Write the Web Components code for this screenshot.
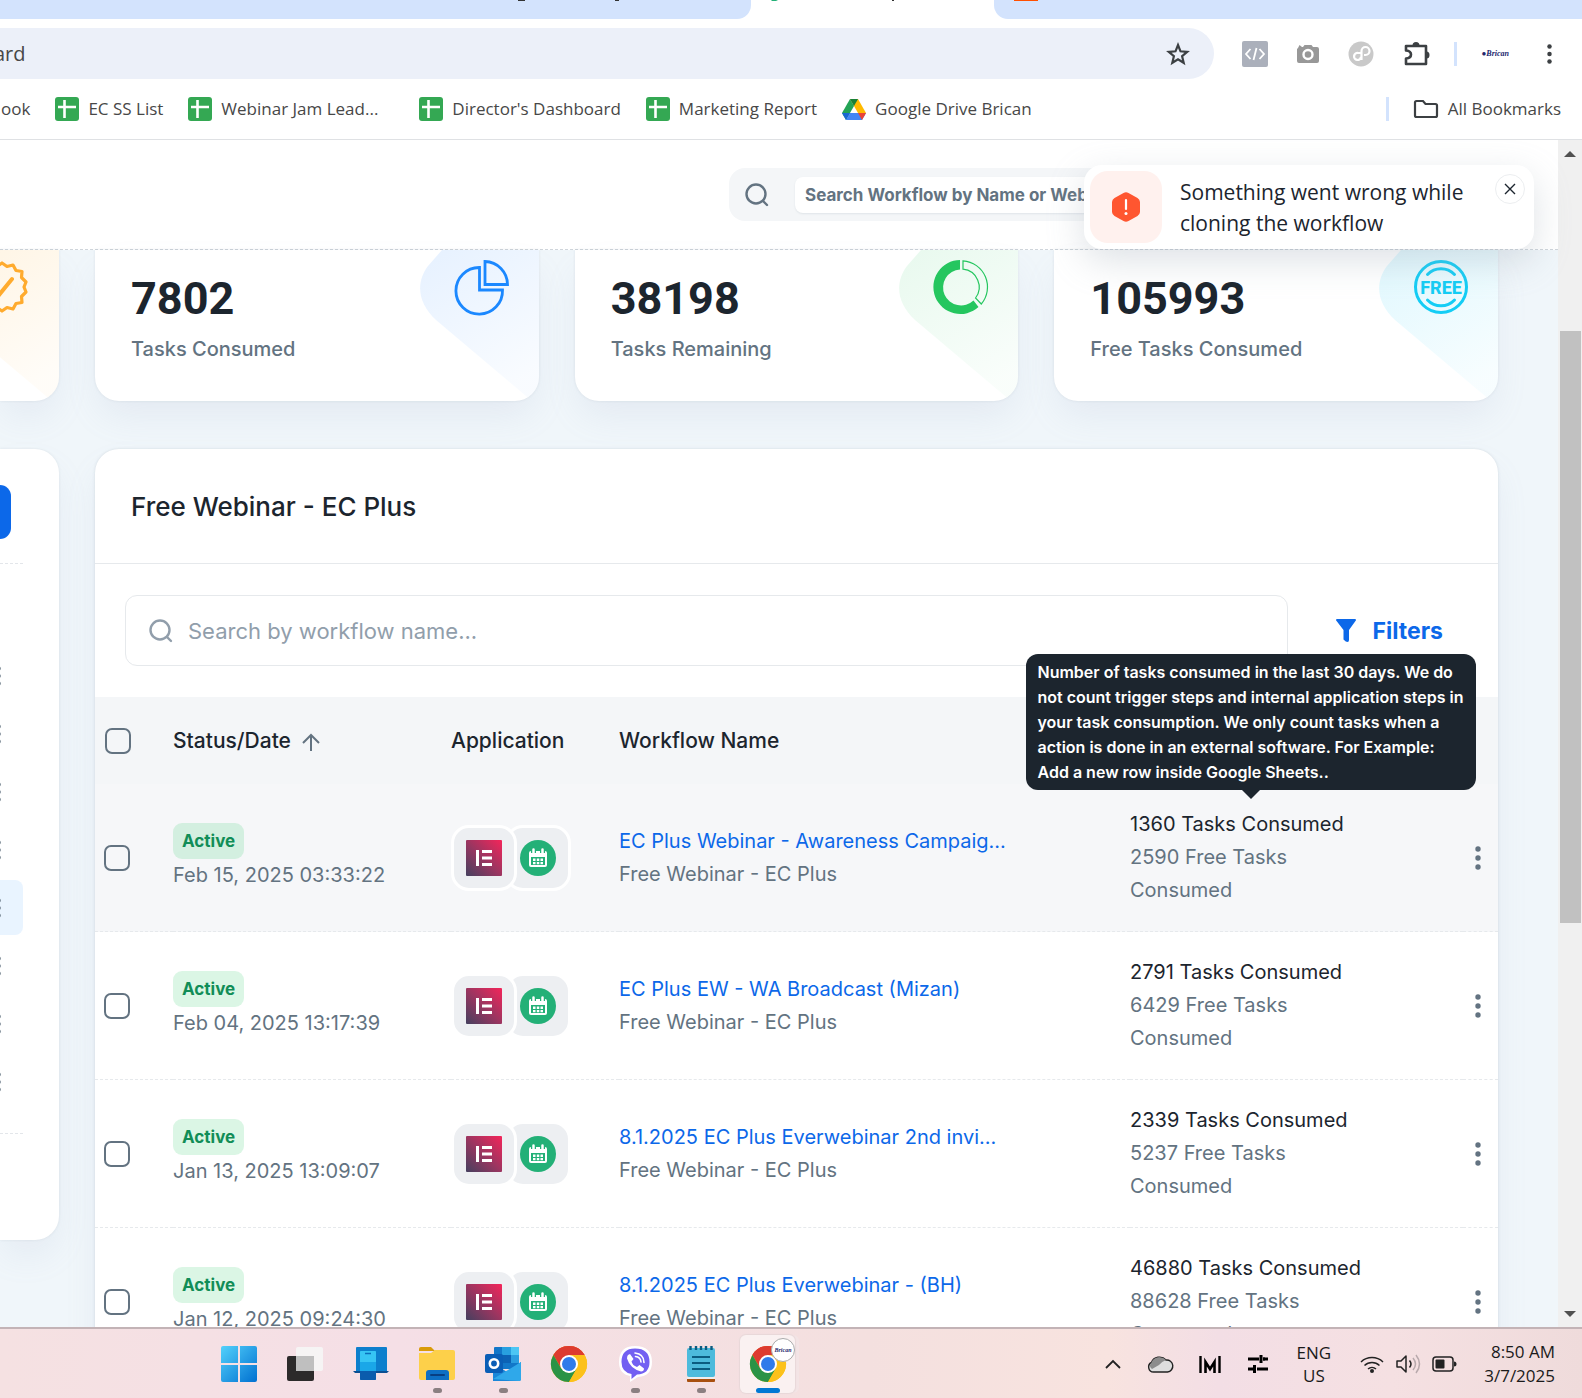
<!DOCTYPE html>
<html lang="en">
<head>
<meta charset="UTF-8">
<title>Workflow Dashboard</title>
<style>
    html, body { height: 100%; }
    body {
        margin: 0;
        overflow: hidden;
        font-family: Inter, "Liberation Sans", sans-serif;
        font-size: 20px;
        line-height: 33px;
        color: #1c252e;
        background: #fff;
        --muted: #637381;
        --blue: #0c68e9;
        --system: "Open Sans", "Noto Sans", sans-serif;
    }
</style>
</head>
<body>
<desktop-screen></desktop-screen>
<script>
const sheetIcon = '<rect width="24" height="24" rx="3" fill="#34a853"/><path d="M9.500 3v18M3 10h18" stroke="#fff" stroke-width="2.600"/>';

const chromeRing = `
    <circle cx="18" cy="18" r="18" fill="#fbbc05"/>
    <path d="M18 18L2.400 9A18 18 0 0 1 33.600 9z" fill="#ea4335"/>
    <path d="M18 9H33.600A18 18 0 0 0 2.400 9L10 22z" fill="#dd3b2f"/>
    <path d="M2.400 9A18 18 0 0 0 18 36L25.800 22.500 18 27 10.200 22.500z" fill="#2a9346"/>
    <path d="M33.600 9A18 18 0 0 1 18 36l7.800-13.500L26 14 18 9z" fill="#fcc11a"/>
    <circle cx="18" cy="18" r="9" fill="#fff"/><circle cx="18" cy="18" r="7" fill="#2f7bea"/>`;

// name: [viewBox, markup]
const ICONS = {
    sheet: ['0 0 24 24', sheetIcon],
    drive: ['0 0 24 22', '<path d="M8 1h8l8 14h-8z" fill="#ffba00"/><path d="M8 1l4 7-8 14-4-7z" fill="#23a455"/><path d="M4 22l4-7h16l-4 7z" fill="#4285f4"/><path d="M8 1h8l-4 7z" fill="#188038"/><path d="M16 15h8l-4 7z" fill="#ea4335"/><path d="M0 15h8l-4 7z" fill="#1967d2"/>'],
    star: ['0 0 24 24', '<path d="M12 3l2.500 6.300 6.700.5-5.100 4.400 1.600 6.600L12 17.200l-5.700 3.600 1.600-6.600-5.100-4.400 6.700-.5z" fill="none" stroke="#3c4043" stroke-width="2.200"/>'],
    code: ['0 0 26 26', '<rect width="26" height="26" rx="2" fill="#abb0bb"/><path d="M8.500 8L4 13l4.500 5M17.500 8l4.500 5-4.500 5M14.500 7l-3 12" fill="none" stroke="#fff" stroke-width="1.800"/>'],
    camera: ['0 0 24 24', '<path d="M2 6l1.500-3L6 5h1l1.500-2h7L17 5h4a2 2 0 0 1 2 2v12a2 2 0 0 1-2 2H3a2 2 0 0 1-2-2V7z" fill="#989898"/><circle cx="12" cy="12.500" r="4.500" fill="none" stroke="#fff" stroke-width="2.400"/>'],
    swirl: ['0 0 26 26', '<circle cx="13" cy="13" r="12.500" fill="#c9c9c9"/><path d="M13.500 19V10a4 4 0 1 1 4 4H16M12.500 12H10a3.500 3.500 0 1 0 3 4" fill="none" stroke="#fff" stroke-width="2.200"/>'],
    puzzle: ['0 0 28 28', '<path d="M4 6h20v18H4v-5.500q5-.5 5-4t-5-4z" fill="none" stroke="#3c4043" stroke-width="2.600" stroke-linejoin="round"/><path d="M10.500 5.500a3.500 3.500 0 0 1 7 0zM24.500 11.500a3 3.500 0 0 1 0 7z" fill="#3c4043"/>'],
    kebab: ['0 0 6 24', '<circle cx="3" cy="3" r="2.700"/><circle cx="3" cy="12" r="2.700"/><circle cx="3" cy="21" r="2.700"/>'],
    folder: ['0 0 26 20', '<path d="M2 3.500Q2 2 3.500 2H10l2.500 3h10Q24 5 24 6.500v10Q24 18 22.500 18h-19Q2 18 2 16.500z" fill="none" stroke="#3c4043" stroke-width="2.200"/>'],
    search: ['0 0 24 24', '<circle cx="11" cy="11" r="9.500" fill="none" stroke="currentColor" stroke-width="2.400"/><path d="M18 18l4 4" stroke="currentColor" stroke-width="2.400" stroke-linecap="round"/>'],
    alert: ['0 0 28 30', '<path d="M11.500 1a5 5 0 0 1 5 0l9 5A5 5 0 0 1 28 10v10a5 5 0 0 1-2.500 4l-9 5a5 5 0 0 1-5 0l-9-5A5 5 0 0 1 0 20V10a5 5 0 0 1 2.500-4z" fill="#ff5630"/><path d="M14 8v9" stroke="#fff" stroke-width="2.200" stroke-linecap="round"/><circle cx="14" cy="21.500" r="1.500" fill="#fff"/>'],
    close: ['0 0 12 12', '<path d="M1 1l10 10M11 1L1 11" stroke="#1c252e" stroke-width="1.400"/>'],
    up: ['0 0 18 19', '<path d="M9 18V2M1 10l8-8 8 8" fill="none" stroke="#637381" stroke-width="2"/>'],
    funnel: ['0 0 20 23', '<path d="M1 0h18q1 0 1 1.300L13 11v10q0 2-1.500 2T7.500 20.500V11L0 1.300Q0 0 1 0z" fill="#0c68e9"/>'],
    seal: ['0 0 54 54', '<path d="M27 3l5 3.500 6-1.500 3 5.500 6 1-.5 6L51 22l-2 5 2 5-4.500 4.500.5 6-6 1-3 5.500-6-1.500-5 3.500-5-3.500-6 1.500-3-5.500-6-1 .5-6L3 32l2-5-2-5 4.500-4.500-.5-6 6-1L16 5l6 1.500z" fill="none" stroke="#ffab2e" stroke-width="3.200" stroke-linejoin="round"/><path d="M17 28l7 7 13-16" fill="none" stroke="#ffab2e" stroke-width="4" stroke-linecap="round"/>'],
    pie: ['0 0 54 54', '<path d="M24.500 7.500v22.500h23A23.300 23.300 0 1 1 24.500 7.500z" fill="none" stroke="#1b88ff" stroke-width="2.800"/><path d="M30 1.500v23h22.500A23 23 0 0 0 30 1.500z" fill="none" stroke="#1b88ff" stroke-width="2.800"/>'],
    donut: ['0 0 54 54', '<path d="M26 0v9.500A18 18 0 1 0 39.500 40.500l5 6.500A27 27 0 1 1 26 0z" fill="#25c65f"/><path d="M29 .8v8.400A18 18 0 0 1 41.500 38l5.800 6A26.300 26.300 0 0 0 29 .8z" fill="none" stroke="#25c65f" stroke-width="1.200"/>'],
    free: ['0 0 54 54', '<circle cx="27" cy="27" r="25.500" fill="none" stroke="#14cdf5" stroke-width="3"/><path d="M13.500 14.500a18.500 18.500 0 0 1 27 0M13.500 40a18.500 18.500 0 0 0 27 0" fill="none" stroke="#14cdf5" stroke-width="3" stroke-linecap="round"/><text x="27" y="34" text-anchor="middle" font-family="Roboto" font-weight="800" font-size="18" fill="#14cdf5">FREE</text>'],
    elementor: ['0 0 36 36', '<defs><linearGradient id="e" x1="0" y1="1" x2="1" y2="0"><stop stop-color="#45405f"/><stop offset=".5" stop-color="#9c3560"/><stop offset="1" stop-color="#f4255a"/></linearGradient></defs><rect width="36" height="36" rx="1" fill="url(#e)"/><path d="M10 10h3v16h-3zM16 10h10v3H16zM16 16.500h10v3H16zM16 23h10v3H16z" fill="#fff"/>'],
    calendar: ['0 0 36 36', '<circle cx="18" cy="18" r="18" fill="#23b077"/><path d="M9 13q0-2 2-2h14q2 0 2 2v12q0 2-2 2H11q-2 0-2-2z" fill="#fff"/><path d="M11 17h14v8H11z" fill="#23b077"/><path d="M13 18.500h2.500V21H13zm3.800 0h2.500V21h-2.500zm3.700 0H23V21h-2.500zM13 22h2.500v2.300H13zm3.800 0h2.500v2.300h-2.500zm3.700 0H23v2.300h-2.500z" fill="#fff"/><path d="M13.500 9v4M22.500 9v4" stroke="#23b077" stroke-width="5"/><path d="M13.500 9.500v4M22.500 9.500v4" stroke="#fff" stroke-width="2.500" stroke-linecap="round"/>'],
    windows: ['0 0 36 36', '<defs><linearGradient id="w" x1="0" y1="0" x2="1" y2="1"><stop stop-color="#53d1fb"/><stop offset="1" stop-color="#0070d1"/></linearGradient></defs><path d="M0 2q0-2 2-2h15v17H0zM19 0h15q2 0 2 2v15H19zM0 19h17v17H2q-2 0-2-2zM19 19h17v15q0 2-2 2H19z" fill="url(#w)"/>'],
    taskview: ['0 0 36 36', '<rect y="10" width="27" height="25" rx="2" fill="#2c2a2a"/><rect x="9" y="1" width="27" height="24" rx="2" fill="#f5f5f5" opacity=".93"/><rect x="9" y="10" width="18" height="15" fill="#bfbfbf"/>'],
    phonelink: ['0 0 36 36', '<rect x="3" y="1" width="31" height="25" rx="1" fill="#0c7fcd"/><path d="M0 25h36l-2 2H2z" fill="#0b4f92"/><rect x="7" y="5" width="16" height="29" rx="1" fill="#1aa7e8"/><path d="M7 6q0-1 1-1h14q1 0 1 1v10H7z" fill="#36c5f4"/><path d="M7 25h16v8q0 1-1 1H8q-1 0-1-1z" fill="#0b5cad"/><path d="M12 7.500h6" stroke="#0b6fbc" stroke-width="1.500"/>'],
    explorer: ['0 0 36 36', '<path d="M0 3q0-2 2-2h10l4 4H0z" fill="#d99b08"/><path d="M0 7h12l4-3h18q2 0 2 2v26q0 2-2 2H2q-2 0-2-2z" fill="#fdd04a"/><path d="M7 34v-7q0-3 3-3h17q3 0 3 3v7z" fill="#0d6fc4"/><path d="M12 29h13" stroke="#083f82" stroke-width="2" stroke-linecap="round"/>'],
    outlook: ['0 0 36 36', '<rect x="9" y="1" width="25" height="22" rx="1" fill="#1277c9"/><path d="M17 1h9v8h-9z" fill="#28a0e0"/><path d="M26 1h8v8h-8z" fill="#4cc6f4"/><path d="M17 9h9v8h-9z" fill="#0c62b5"/><path d="M26 9h8v8h-8z" fill="#2a9de0"/><path d="M8 17l14 9 14-10v17q0 2-2 2H8z" fill="#1a86d8"/><path d="M8 33l26 2q2 0 2-2V16z" fill="#2fa8ea"/><rect y="8" width="18" height="19" rx="2" fill="#0a5eb6"/><circle cx="9" cy="17.500" r="4.200" fill="none" stroke="#fff" stroke-width="2.600"/>'],
    chrome: ['0 0 36 36', chromeRing],
    viber: ['0 0 36 36', '<path d="M18 0Q35 0 35 16 35 30 21 31l-8 5v-6Q2 28 2 16 2 0 18 0z" fill="#fff"/><path d="M18 2.500q14.500 0 14.500 13.500Q32.500 28 20 28.500L14.500 33v-5Q4.500 26 4.500 16 4.500 2.500 18 2.500z" fill="#7360f2"/><path d="M11 9l2-1 3.500 5-2 2.500q1 4 5.500 5.500l2.500-2 4.500 3.500q0 3-3 3-11-3-14-13 0-2.500 1-3.500z" fill="#fff"/><path d="M18 7q9 1 9 9.500M18.500 10.500q5 .500 5.500 5.500" fill="none" stroke="#fff" stroke-width="1.600" stroke-linecap="round"/>'],
    notepad: ['0 0 30 36', '<rect x="1" y="31" width="28" height="5" rx="1" fill="#a8500f"/><path d="M1 32h28" stroke="#eee" stroke-width="2"/><rect x="1" y="2" width="28" height="29" rx="2" fill="#4dbbdc"/><path d="M4.500 0v4M10 0v4M15 0v4M20 0v4M25.500 0v4" stroke="#0b5c80" stroke-width="2.400"/><path d="M6 11h18M6 17h18M6 23h18" stroke="#0b5c80" stroke-width="2"/>'],
    chevron: ['0 0 16 10', '<path d="M1 9l7-7 7 7" fill="none" stroke="#222" stroke-width="1.800"/>'],
    cloud: ['0 0 24 18', '<path d="M5.500 17A5 5 0 0 1 3.500 7.500 8.500 8 0 0 1 18 5a6 6 0 0 1 1.500 12z" fill="#dedede" stroke="#222" stroke-width="1.400"/><path d="M3.500 7.500A8.500 8 0 0 1 18 5q-5 2-7 5l-7 4Q0 11 3.500 7.500z" fill="#8c8c8c"/>'],
    malware: ['0 0 22 18', '<path d="M1.500 1v17M20.500 1v17" stroke="#000" stroke-width="2.400"/><path d="M6.500 18V7l4.500 7 4.500-7v11" fill="none" stroke="#000" stroke-width="2.600"/>'],
    sliders: ['0 0 20 18', '<path d="M0 4h11M15 4h5M0 14h5M9 14h11" stroke="#000" stroke-width="3"/><path d="M13 0v8M15 4h2M6.500 10v8" stroke="#000" stroke-width="3"/>'],
    wifi: ['0 0 24 18', '<path d="M1 7a16 16 0 0 1 22 0M4.500 10.500a11 11 0 0 1 15 0M8 14a6 6 0 0 1 8 0" fill="none" stroke="#222" stroke-width="1.500"/><circle cx="12" cy="16" r="2" fill="#222"/>'],
    volume: ['0 0 24 20', '<path d="M1 7h4l5-5v16l-5-5H1z" fill="none" stroke="#222" stroke-width="1.500" stroke-linejoin="round"/><path d="M13.500 6.500q3 3.500 0 7" fill="none" stroke="#222" stroke-width="1.500"/><path d="M17 4q5 6 0 12M20 1q7 9 0 18" fill="none" stroke="#b8a9ac" stroke-width="1.500"/>'],
    battery: ['0 0 25 16', '<rect x="1" y="1" width="20" height="14" rx="3" fill="none" stroke="#222" stroke-width="1.500"/><rect x="3.500" y="3.500" width="9" height="9" rx="1" fill="#222"/><path d="M22 5.500q2.500 0 2.500 2.500T22 10.500z" fill="#222"/>']
};

class UiIcon extends HTMLElement {
    connectedCallback() {
        const [box, body] = ICONS[this.getAttribute('name')];
        const [, , w, h] = box.split(' ');
        this.attachShadow({ mode: 'open' });
        this.shadowRoot.innerHTML = `
            <style>
                :host { display: inline-flex; flex: none; }
                svg { display: block; fill: currentColor; overflow: visible; }
            </style>
            <svg width="${this.getAttribute('width') || w}" height="${this.getAttribute('height') || h}" viewBox="${box}" aria-hidden="true">${body}</svg>
        `;
    }
}
customElements.define('ui-icon', UiIcon);

class BrowserTabs extends HTMLElement {
    connectedCallback() {
        this.attachShadow({ mode: 'open' });
        this.shadowRoot.innerHTML = `
            <style>
                :host { display: flex; height: 19px; background: #fff; }
                .left { flex: 0 0 751px; background: #d3e3fd; border-bottom-right-radius: 14px; }
                .active { flex: 0 0 243px; }
                .right { flex: 1; background: #d3e3fd; border-bottom-left-radius: 14px; }
                svg { display: block; }
            </style>
            <div class="left"><svg width="751" height="2"><path d="M518 0h7M615 0h4" stroke="#333" stroke-width="2"/></svg></div>
            <div class="active"><svg width="243" height="2"><path d="M20 0h7l-2 1h-4z" fill="#23b077"/><path d="M141 0h2" stroke="#333" stroke-width="2"/></svg></div>
            <div class="right"><svg width="60" height="2"><rect x="20" width="24" height="1" fill="#ff4f00"/></svg></div>
        `;
    }
}
customElements.define('browser-tabs', BrowserTabs);

class BrowserToolbar extends HTMLElement {
    connectedCallback() {
        this.attachShadow({ mode: 'open' });
        this.shadowRoot.innerHTML = `
            <style>
                :host {
                    display: flex;
                    align-items: center;
                    padding: 9px 30px 9px 0;
                    background: #fff;
                    font-family: var(--system);
                    color: #3c4043;
                }
                .address {
                    flex: 1;
                    display: flex;
                    align-items: center;
                    height: 51px;
                    padding-right: 24px;
                    background: #ecf0f9;
                    border-radius: 0 26px 26px 0;
                }
                input {
                    flex: 1;
                    min-width: 0;
                    border: 0;
                    padding: 0;
                    background: none;
                    font: 20px var(--system);
                    text-indent: -6px;
                    color: #474747;
                }
                button { display: flex; border: 0; padding: 0; background: none; color: inherit; }
                .tools { display: flex; align-items: center; gap: 28px; padding-left: 28px; }
                .divider { width: 3px; height: 24px; margin: 0 -4px; background: #d3e3fd; }
                .profile { margin-right: 10px; font: italic bold 8px "Liberation Serif", serif; color: #23276e; align-items: center; }
            </style>
            <div class="address">
                <input type="text" aria-label="Address" value="ard">
                <button aria-label="Bookmark this page"><ui-icon name="star"></ui-icon></button>
            </div>
            <div class="tools">
                <button aria-label="Code"><ui-icon name="code"></ui-icon></button>
                <button aria-label="Camera"><ui-icon name="camera"></ui-icon></button>
                <button aria-label="Link"><ui-icon name="swirl"></ui-icon></button>
                <button aria-label="Extensions"><ui-icon name="puzzle"></ui-icon></button>
                <div class="divider"></div>
                <button class="profile">●Brican</button>
                <button aria-label="Menu"><ui-icon name="kebab" width="5" height="22"></ui-icon></button>
            </div>
        `;
    }
}
customElements.define('browser-toolbar', BrowserToolbar);

class BookmarkLink extends HTMLElement {
    connectedCallback() {
        const icon = this.getAttribute('icon');
        this.attachShadow({ mode: 'open' });
        this.shadowRoot.innerHTML = `
            <style>
                :host { display: block; flex: none; }
                a { display: flex; align-items: center; gap: 9px; color: #474747; text-decoration: none; white-space: nowrap; }
            </style>
            <a href="#">${icon ? `<ui-icon name="${icon}"></ui-icon>` : ''}<slot></slot></a>
        `;
    }
}
customElements.define('bookmark-link', BookmarkLink);

class BookmarksBar extends HTMLElement {
    connectedCallback() {
        this.attachShadow({ mode: 'open' });
        this.shadowRoot.innerHTML = `
            <style>
                :host {
                    display: flex;
                    align-items: center;
                    gap: 25px;
                    box-sizing: border-box;
                    height: 52px;
                    padding: 0 21px 9px 1px;
                    background: #fff;
                    border-bottom: 1px solid #dfe1e4;
                    font: 17px/24px var(--system);
                }
                .wide { width: 206px; }
                .all { margin-left: auto; padding-left: 24px; border-left: 3px solid #d3e3fd; }
            </style>
            <bookmark-link>ook</bookmark-link>
            <bookmark-link icon="sheet">EC SS List</bookmark-link>
            <bookmark-link class="wide" icon="sheet">Webinar Jam Lead...</bookmark-link>
            <bookmark-link icon="sheet">Director's Dashboard</bookmark-link>
            <bookmark-link icon="sheet">Marketing Report</bookmark-link>
            <bookmark-link icon="drive">Google Drive Brican</bookmark-link>
            <bookmark-link class="all" icon="folder">All Bookmarks</bookmark-link>
        `;
    }
}
customElements.define('bookmarks-bar', BookmarksBar);

class AppHeader extends HTMLElement {
    connectedCallback() {
        this.attachShadow({ mode: 'open' });
        this.shadowRoot.innerHTML = `
            <style>
                :host {
                    display: flex;
                    justify-content: flex-end;
                    align-items: center;
                    box-sizing: border-box;
                    height: 110px;
                    padding-right: 180px;
                    background: #fff;
                    border-bottom: 1px dashed #cfd5db;
                }
                label {
                    display: flex;
                    align-items: center;
                    gap: 26px;
                    box-sizing: border-box;
                    width: 649px;
                    height: 53px;
                    padding: 0 16px;
                    border-radius: 16px;
                    background: #f4f6f8;
                    color: var(--muted);
                }
                input {
                    flex: 1;
                    height: 36px;
                    box-sizing: border-box;
                    border: 0;
                    border-radius: 8px;
                    padding: 0 10px;
                    background: #fff;
                    box-shadow: 0 1px 2px rgba(145, 158, 171, 0.2);
                    font: 700 17px Inter, sans-serif;
                }
                input::placeholder { color: var(--muted); opacity: 1; }
            </style>
            <label><ui-icon name="search"></ui-icon><input type="text" placeholder="Search Workflow by Name or Webhook URL"></label>
        `;
    }
}
customElements.define('app-header', AppHeader);

class ToastMessage extends HTMLElement {
    connectedCallback() {
        this.attachShadow({ mode: 'open' });
        this.shadowRoot.innerHTML = `
            <style>
                :host {
                    display: flex;
                    gap: 18px;
                    box-sizing: border-box;
                    width: 450px;
                    padding: 6px 9px 6px 6px;
                    border-radius: 18px;
                    background: #fff;
                    box-shadow: 0 12px 36px rgba(145, 158, 171, 0.3);
                    font: 500 21px/31px var(--system);
                }
                .icon {
                    flex: none;
                    display: flex;
                    align-items: center;
                    justify-content: center;
                    width: 72px;
                    height: 72px;
                    border-radius: 18px;
                    background: #fff1ee;
                }
                p { flex: 1; margin: 0; padding-top: 6px; }
                button {
                    flex: none;
                    display: flex;
                    align-items: center;
                    justify-content: center;
                    width: 30px;
                    height: 30px;
                    margin-top: 3px;
                    padding: 0;
                    border: 1px solid #eceef0;
                    border-radius: 50%;
                    background: #fff;
                }
            </style>
            <div class="icon"><ui-icon name="alert"></ui-icon></div>
            <p><slot></slot></p>
            <button aria-label="Close"><ui-icon name="close"></ui-icon></button>
        `;
    }
}
customElements.define('toast-message', ToastMessage);

class StatCard extends HTMLElement {
    connectedCallback() {
        const tint = this.getAttribute('tint');
        this.attachShadow({ mode: 'open' });
        this.shadowRoot.innerHTML = `
            <style>
                :host {
                    display: block;
                    position: relative;
                    overflow: hidden;
                    box-sizing: border-box;
                    min-width: 0;
                    height: 151px;
                    padding-top: 22px;
                    border-radius: 0 0 24px 24px;
                    background: #fff;
                    box-shadow: 0 0 3px rgba(145, 158, 171, 0.2), 0 18px 36px -6px rgba(145, 158, 190, 0.14);
                }
                :host(:first-child) { border-bottom-left-radius: 0; }
                .shape { position: absolute; top: 0; right: 0; }
                ui-icon { position: absolute; top: 10px; right: 30px; }
                strong, span { display: block; margin-left: 36px; }
                strong { font: 700 45px/54px Roboto, sans-serif; }
                span { margin-top: 7px; font-weight: 500; color: var(--muted); }
            </style>
            <svg class="shape" width="119" height="151" aria-hidden="true">
                <defs><linearGradient id="g" x1="0" y1="0" x2=".5" y2="1"><stop stop-color="${tint}"/><stop offset="1" stop-color="${tint}" stop-opacity=".25"/></linearGradient></defs>
                <path d="M22 0L8 16C-4 32 -3 52 16 70L119 157V0z" fill="url(#g)"/>
            </svg>
            <ui-icon name="${this.getAttribute('icon')}"></ui-icon>
            ${this.hasAttribute('value') ? `<strong>${this.getAttribute('value')}</strong><span><slot></slot></span>` : ''}
        `;
    }
}
customElements.define('stat-card', StatCard);

class FolderPanel extends HTMLElement {
    connectedCallback() {
        const items = Array.from({ length: 8 }, (_, i) =>
            `<li${i === 4 ? ' class="selected"' : ''}><button aria-label="Folder options"><ui-icon name="kebab" width="5" height="20"></ui-icon></button></li>`).join('');
        this.attachShadow({ mode: 'open' });
        this.shadowRoot.innerHTML = `
            <style>
                :host {
                    display: block;
                    align-self: start;
                    box-sizing: border-box;
                    height: 791px;
                    padding: 36px 36px 0 0;
                    border-radius: 0 24px 24px 0;
                    background: #fff;
                    box-shadow: 0 0 3px rgba(145, 158, 171, 0.2), 0 18px 36px -6px rgba(145, 158, 190, 0.14);
                }
                .create { display: block; width: 11px; height: 54px; padding: 0; border: 0; border-radius: 0 12px 12px 0; background: var(--blue); }
                ul {
                    display: flex;
                    flex-direction: column;
                    gap: 3px;
                    margin: 24px 0 0;
                    padding: 84px 0 24px;
                    list-style: none;
                    border: dashed #e3e6ea;
                    border-width: 1px 0;
                }
                li { display: flex; align-items: center; height: 55px; }
                .selected { background: #e9f4ff; border-radius: 0 8px 8px 0; }
                li button { display: flex; border: 0; padding: 0; margin-left: -4px; background: none; color: var(--muted); }
            </style>
            <button class="create" aria-label="Create"></button>
            <ul>${items}</ul>
        `;
    }
}
customElements.define('folder-panel', FolderPanel);

class StatusBadge extends HTMLElement {
    connectedCallback() {
        this.attachShadow({ mode: 'open' });
        this.shadowRoot.innerHTML = `
            <style>
                :host {
                    display: block;
                    width: fit-content;
                    padding: 0 9px;
                    border-radius: 9px;
                    background: rgba(34, 197, 94, 0.16);
                    font-weight: 700;
                    font-size: 17px;
                    line-height: 36px;
                    color: #118d57;
                }
            </style>
            <slot></slot>
        `;
    }
}
customElements.define('status-badge', StatusBadge);

class AppStack extends HTMLElement {
    connectedCallback() {
        this.attachShadow({ mode: 'open' });
        this.shadowRoot.innerHTML = `
            <style>
                :host { display: flex; }
                div {
                    display: flex;
                    padding: 12px;
                    border: 3px solid #fff;
                    border-radius: 18px;
                    background: #edeff2;
                }
                .front { position: relative; z-index: 1; margin-right: -12px; }
            </style>
            <div class="front"><ui-icon name="elementor"></ui-icon></div>
            <div><ui-icon name="calendar"></ui-icon></div>
        `;
    }
}
customElements.define('app-stack', AppStack);

class InfoTooltip extends HTMLElement {
    connectedCallback() {
        this.attachShadow({ mode: 'open' });
        this.shadowRoot.innerHTML = `
            <style>
                :host {
                    display: block;
                    box-sizing: border-box;
                    width: 450px;
                    padding: 6px 10px 5px 12px;
                    border-radius: 12px;
                    background: #1c252e;
                    color: #fff;
                    font-size: 16px;
                    font-weight: 600;
                    line-height: 25px;
                }
                :host::after {
                    content: '';
                    position: absolute;
                    top: 100%;
                    left: 50%;
                    margin-left: -9px;
                    border: 9px solid transparent;
                    border-top-color: #1c252e;
                    border-bottom: 0;
                }
            </style>
            <slot></slot>
        `;
    }
}
customElements.define('info-tooltip', InfoTooltip);

const workflows = [
    { date: 'Feb 15, 2025 03:33:22', name: 'EC Plus Webinar - Awareness Campaig...', tasks: 1360, free: 2590 },
    { date: 'Feb 04, 2025 13:17:39', name: 'EC Plus EW - WA Broadcast (Mizan)', tasks: 2791, free: 6429 },
    { date: 'Jan 13, 2025 13:09:07', name: '8.1.2025 EC Plus Everwebinar 2nd invi...', tasks: 2339, free: 5237 },
    { date: 'Jan 12, 2025 09:24:30', name: '8.1.2025 EC Plus Everwebinar - (BH)', tasks: 46880, free: 88628 }
];

class WorkflowPanel extends HTMLElement {
    connectedCallback() {
        const rows = workflows.map((w, i) => `
            <tr${i === 0 ? ' class="hover"' : ''}>
                <td><input type="checkbox" aria-label="Select ${w.name}"></td>
                <td><status-badge>Active</status-badge><div class="muted">${w.date}</div></td>
                <td><app-stack></app-stack></td>
                <td><a href="#">${w.name}</a><div class="muted">Free Webinar - EC Plus</div></td>
                <td><div class="tasks">
                    ${w.tasks} Tasks Consumed<div class="muted">${w.free} Free Tasks Consumed</div>
                    ${i === 0 ? `<info-tooltip>Number of tasks consumed in the last 30 days. We do not count trigger steps and internal application steps in your task consumption. We only count tasks when a action is done in an external software. For Example: Add a new row inside Google Sheets..</info-tooltip>` : ''}
                </div></td>
                <td><button class="more" aria-label="More"><ui-icon name="kebab"></ui-icon></button></td>
            </tr>`).join('');
        this.attachShadow({ mode: 'open' });
        this.shadowRoot.innerHTML = `
            <style>
                :host {
                    display: block;
                    min-width: 0;
                    border-radius: 24px 24px 0 0;
                    background: #fff;
                    box-shadow: 0 0 3px rgba(145, 158, 171, 0.3), 0 18px 36px -6px rgba(145, 158, 190, 0.14);
                }
                h2 {
                    margin: 0;
                    padding: 40px 36px 38px;
                    border-bottom: 1px solid #e6e9ec;
                    font-size: 26px;
                    font-weight: 500;
                    line-height: 36px;
                }
                .bar { display: flex; align-items: center; padding: 31px 55px 31px 30px; }
                label {
                    flex: 1;
                    display: flex;
                    align-items: center;
                    gap: 15px;
                    height: 69px;
                    padding: 0 23px;
                    border: 1px solid #e6e9ec;
                    border-radius: 12px;
                    color: #919eab;
                }
                .bar input { flex: 1; border: 0; padding: 0; background: none; font: 22px Inter, sans-serif; }
                .bar input::placeholder { color: #919eab; opacity: 1; }
                .filters {
                    display: flex;
                    align-items: center;
                    gap: 17px;
                    margin-left: 48px;
                    border: 0;
                    padding: 0;
                    background: none;
                    font: 700 23px Inter, sans-serif;
                    color: var(--blue);
                }
                table { width: 100%; table-layout: fixed; border-collapse: collapse; }
                th { height: 87px; padding: 0; background: #f4f6f8; font-size: 21px; font-weight: 500; text-align: left; }
                th ui-icon { margin-left: 11px; vertical-align: middle; }
                td { height: 147px; padding: 0; border-bottom: 1px dashed #e6e9ec; }
                .hover td { background: #f6f7f9; }
                .muted { color: var(--muted); }
                th:first-child { padding-left: 10px; }
                td:first-child { padding-left: 9px; }
                td input, th input {
                    appearance: none;
                    display: block;
                    width: 26px;
                    height: 26px;
                    margin: 0;
                    border: 2px solid #637381;
                    border-radius: 7px;
                }
                a { color: var(--blue); text-decoration: none; }
                a, .muted { white-space: nowrap; }
                .tasks { position: relative; width: 243px; }
                .tasks .muted { white-space: normal; width: 200px; }
                info-tooltip { position: absolute; bottom: calc(100% + 18px); left: calc(50% - 226px); }
                .more { display: flex; padding: 0; margin-left: 12px; border: 0; background: none; color: var(--muted); }
            </style>
            <h2>Free Webinar - EC Plus</h2>
            <div class="bar">
                <label><ui-icon name="search"></ui-icon><input type="text" placeholder="Search by workflow name..."></label>
                <button class="filters"><ui-icon name="funnel"></ui-icon>Filters</button>
            </div>
            <table>
                <colgroup><col style="width: 78px"><col style="width: 278px"><col style="width: 168px"><col><col style="width: 333px"><col style="width: 35px"></colgroup>
                <thead>
                    <tr>
                        <th><input type="checkbox" aria-label="Select all"></th>
                        <th>Status/Date<ui-icon name="up"></ui-icon></th>
                        <th>Application</th>
                        <th>Workflow Name</th>
                        <th></th>
                        <th></th>
                    </tr>
                </thead>
                <tbody>${rows}</tbody>
            </table>
        `;
    }
}
customElements.define('workflow-panel', WorkflowPanel);

class PageScrollbar extends HTMLElement {
    connectedCallback() {
        this.attachShadow({ mode: 'open' });
        this.shadowRoot.innerHTML = `
            <style>
                :host { flex: none; display: flex; flex-direction: column; width: 24px; background: #f0f0f0; }
                .arrow { display: flex; align-items: center; justify-content: center; height: 27px; }
                .track { flex: 1; display: grid; grid-template-rows: 164fr 592fr 377fr; }
                .thumb { grid-row: 2; margin: 0 1px 0 2px; background: #c1c1c1; }
            </style>
            <div class="arrow"><svg width="12" height="6"><path d="M6 0l6 6H0z" fill="#505050"/></svg></div>
            <div class="track"><div class="thumb"></div></div>
            <div class="arrow"><svg width="12" height="6"><path d="M0 0h12L6 6z" fill="#505050"/></svg></div>
        `;
    }
}
customElements.define('page-scrollbar', PageScrollbar);

class TaskBar extends HTMLElement {
    connectedCallback() {
        const apps = [['windows', 'Start'], ['taskview', 'Task view'], ['phonelink', 'Phone Link'], ['explorer', 'File Explorer', 1], ['outlook', 'Outlook', 1], ['chrome', 'Chrome'], ['viber', 'Viber', 1], ['notepad', 'Notepad', 1]];
        this.attachShadow({ mode: 'open' });
        this.shadowRoot.innerHTML = `
            <style>
                :host {
                    flex: none;
                    display: flex;
                    align-items: center;
                    box-sizing: border-box;
                    height: 71px;
                    padding: 0 27px 0 206px;
                    border-top: 2px solid #c3b3b6;
                    background: linear-gradient(90deg, #f5e1e2, #f5dfe6 25%, #f4e0df 55%, #f8e3df 70%, #f3dee5 77%, #f5e0e2 88%, #efdbdb);
                    font: 17px/24px var(--system);
                    color: #1a1a1a;
                }
                button { position: relative; display: flex; align-items: center; justify-content: center; border: 0; padding: 0; background: none; }
                .app { width: 66px; height: 58px; }
                .running::after {
                    content: '';
                    position: absolute;
                    left: 29px;
                    bottom: 0;
                    width: 9px;
                    height: 5px;
                    border-radius: 3px;
                    background: #8b7f81;
                }
                .current {
                    width: 55px;
                    height: 58px;
                    margin-left: 6px;
                    border-radius: 6px;
                    background: #faf1f1;
                    box-shadow: 0 0 1px 1px #e8d8d9, 4px 0 0 #f3e4e5;
                }
                .current::after {
                    content: '';
                    position: absolute;
                    left: 16px;
                    bottom: 0;
                    width: 24px;
                    height: 5px;
                    border-radius: 3px;
                    background: #0078d4;
                }
                .profile {
                    position: absolute;
                    top: 3px;
                    right: 0;
                    width: 22px;
                    border: 1px solid #aaa;
                    border-radius: 50%;
                    background: #fff;
                    font: italic bold 6px/22px "Liberation Serif", serif;
                    color: #23276e;
                    text-align: center;
                }
                .tray { margin-left: auto; display: flex; align-items: center; gap: 27px; }
                .lang { text-align: center; line-height: 23px; margin: 0 2px; }
                .status { display: flex; align-items: center; gap: 12px; }
                .clock { text-align: right; }
            </style>
            ${apps.map(([icon, label, running]) => `<button class="app${running ? ' running' : ''}" aria-label="${label}"><ui-icon name="${icon}"></ui-icon></button>`).join('')}
            <button class="current" aria-label="Chrome, Brican"><ui-icon name="chrome"></ui-icon><span class="profile">Brican</span></button>
            <div class="tray">
                <ui-icon name="chevron"></ui-icon>
                <ui-icon name="cloud"></ui-icon>
                <ui-icon name="malware"></ui-icon>
                <ui-icon name="sliders"></ui-icon>
                <div class="lang">ENG<br>US</div>
                <div class="status">
                    <ui-icon name="wifi"></ui-icon>
                    <ui-icon name="volume"></ui-icon>
                    <ui-icon name="battery"></ui-icon>
                </div>
                <div class="clock">8:50 AM<br>3/7/2025</div>
            </div>
        `;
    }
}
customElements.define('task-bar', TaskBar);

class DesktopScreen extends HTMLElement {
    connectedCallback() {
        this.attachShadow({ mode: 'open' });
        this.shadowRoot.innerHTML = `
            <style>
                :host { display: flex; flex-direction: column; height: 100vh; overflow: hidden; }
                browser-tabs, browser-toolbar, bookmarks-bar { flex: none; }
                .view { flex: 1; min-height: 0; display: flex; overflow: hidden; }
                main { position: relative; flex: 1; min-width: 0; background: #f0f6fa; }
                toast-message { position: absolute; top: 25px; right: 24px; z-index: 5; }
                .stats, .panels { display: grid; column-gap: 36px; padding-right: 60px; }
                .stats { grid-template-columns: 59px repeat(3, 1fr); }
                .panels { grid-template-columns: 59px 1fr; margin-top: 48px; }
            </style>
            <browser-tabs></browser-tabs>
            <browser-toolbar></browser-toolbar>
            <bookmarks-bar></bookmarks-bar>
            <div class="view">
                <main>
                    <app-header></app-header>
                    <toast-message>Something went wrong while cloning the workflow</toast-message>
                    <div class="stats">
                        <stat-card icon="seal" tint="#fff4e2"></stat-card>
                        <stat-card icon="pie" tint="#e6f1ff" value="7802">Tasks Consumed</stat-card>
                        <stat-card icon="donut" tint="#e8f9ee" value="38198">Tasks Remaining</stat-card>
                        <stat-card icon="free" tint="#e0f8fe" value="105993">Free Tasks Consumed</stat-card>
                    </div>
                    <div class="panels">
                        <folder-panel></folder-panel>
                        <workflow-panel></workflow-panel>
                    </div>
                </main>
                <page-scrollbar></page-scrollbar>
            </div>
            <task-bar></task-bar>
        `;
    }
}
customElements.define('desktop-screen', DesktopScreen);
</script>
</body>
</html>
